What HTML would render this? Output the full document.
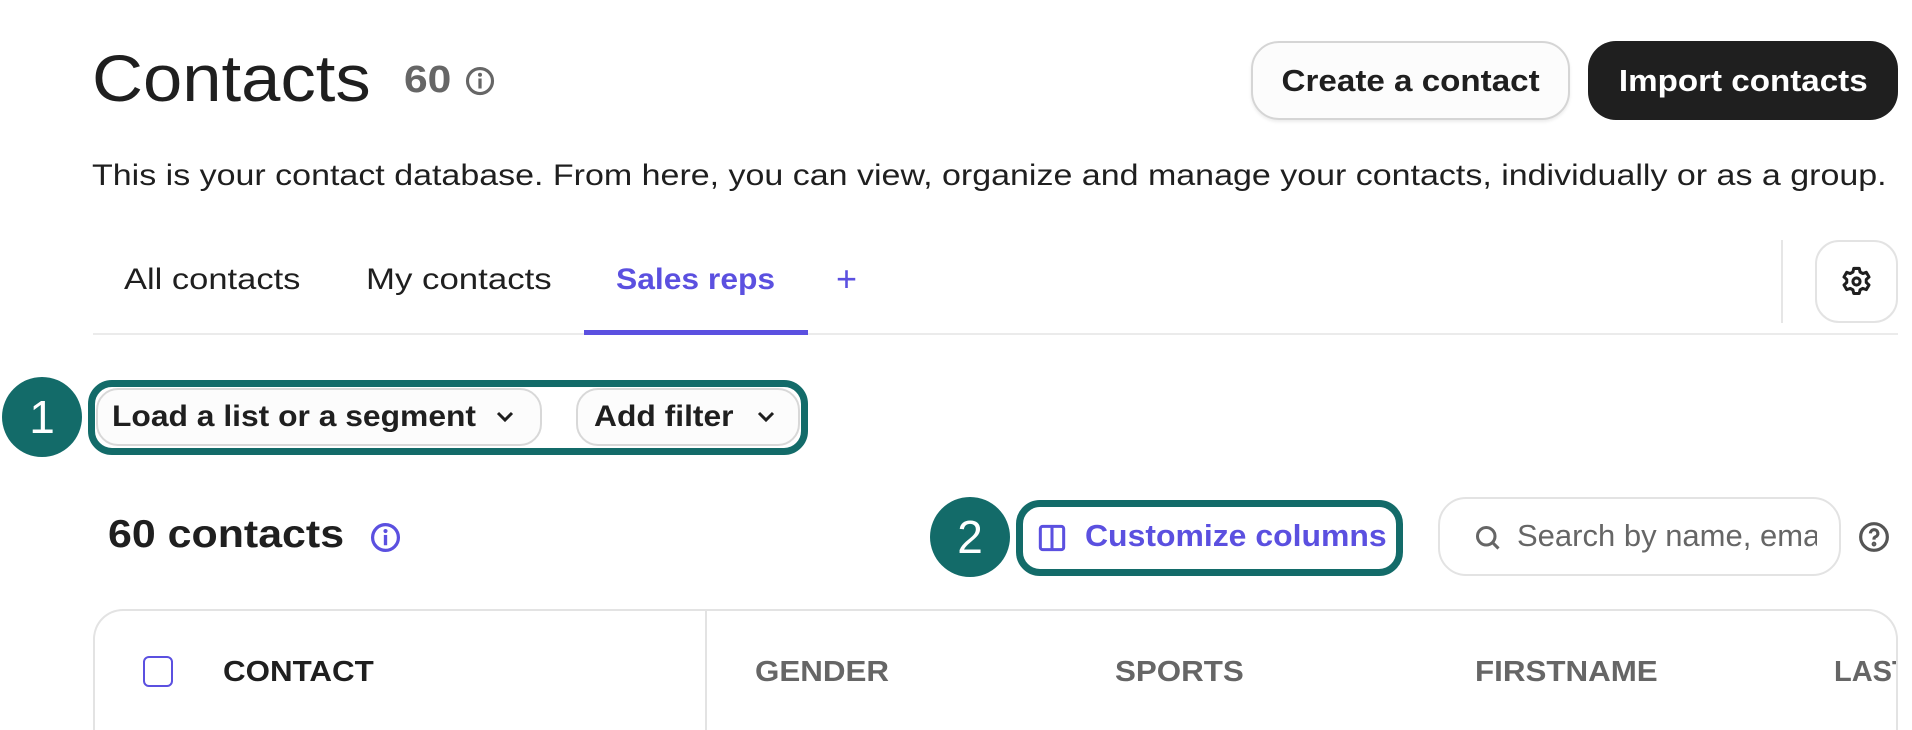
<!DOCTYPE html>
<html style="width:1912px;height:730px;overflow:hidden"><head><meta charset="utf-8"><style>
*{box-sizing:border-box;margin:0;padding:0}
body{width:1912px;height:730px;overflow:hidden;background:#fff;font-family:"Liberation Sans",sans-serif;color:#1f1f1f;position:relative}
.a{position:absolute;white-space:nowrap;transform-origin:left center}
.btn{position:absolute;border-radius:28px;display:flex;align-items:center;justify-content:center;font-weight:bold;font-size:31px;white-space:nowrap}
.btn span{display:inline-block}
.circ{position:absolute;width:80px;height:80px;border-radius:50%;background:#136b69;color:#fff;font-size:46px;display:flex;align-items:center;justify-content:center}
.th{position:absolute;top:656px;font-size:29px;font-weight:bold;color:#666;transform:scaleX(1.08);transform-origin:left center;white-space:nowrap}
</style></head><body>
<div class="a" style="left:92px;top:40px;font-size:66px;color:#1f1f1f;transform:scaleX(1.07)">Contacts</div>
<div class="a" style="left:404px;top:59px;font-size:38px;font-weight:bold;color:#666;transform:scaleX(1.12)">60</div>
<svg class="a" style="left:465px;top:66px" width="30" height="30" viewBox="0 0 24 24"><circle cx="12" cy="12" r="10" fill="none" stroke="#666" stroke-width="2.5"/><rect x="10.7" y="10" width="2.6" height="8" fill="#666"/><circle cx="12" cy="7" r="1.6" fill="#666"/></svg>
<div class="btn" style="left:1251px;top:41px;width:319px;height:79px;border:2px solid #d5d5d5;background:#fcfcfc;box-shadow:0 2px 3px rgba(0,0,0,.08)"><span style="transform:scaleX(1.07)">Create a contact</span></div>
<div class="btn" style="left:1588px;top:41px;width:310px;height:79px;background:#1f1f1f;color:#fff"><span style="transform:scaleX(1.07)">Import contacts</span></div>
<div class="a" style="left:92px;top:159px;font-size:29.3px;color:#1f1f1f;transform:scaleX(1.16)">This is your contact database. From here, you can view, organize and manage your contacts, individually or as a group.</div>
<div class="a" style="left:124px;top:263px;font-size:30px;transform:scaleX(1.15)">All contacts</div>
<div class="a" style="left:366px;top:263px;font-size:30px;transform:scaleX(1.16)">My contacts</div>
<div class="a" style="left:616px;top:263px;font-size:30px;font-weight:bold;color:#5b50e0;transform:scaleX(1.06)">Sales reps</div>
<div class="a" style="left:836px;top:258px;font-size:36px;color:#5b50e0">+</div>
<div class="a" style="left:93px;top:333px;width:1805px;height:2px;background:#ebebeb"></div>
<div class="a" style="left:584px;top:330px;width:224px;height:5px;background:#5b50e0"></div>
<div class="a" style="left:1781px;top:240px;width:2px;height:83px;background:#e6e6e6"></div>
<div class="a" style="left:1815px;top:240px;width:83px;height:83px;border:2px solid #e3e3e3;border-radius:24px"></div>
<svg class="a" style="left:1840px;top:265px" width="33" height="33" viewBox="0 0 24 24" fill="none" stroke="#1f1f1f" stroke-width="2.2" stroke-linejoin="round"><path d="M10 2.5h4l.6 2.6 2 1.1 2.5-.9 2 3.4-2 1.8v2.2l2 1.8-2 3.4-2.5-.9-2 1.1-.6 2.6h-4l-.6-2.6-2-1.1-2.5.9-2-3.4 2-1.8v-2.2l-2-1.8 2-3.4 2.5.9 2-1.1z"/><circle cx="12" cy="12" r="2.6"/></svg>
<div class="circ" style="left:2px;top:377px">1</div>
<div class="a" style="left:88px;top:380px;width:720px;height:75px;border:7px solid #136b69;border-radius:24px"></div>
<div class="btn" style="left:96px;top:388px;width:446px;height:58px;border:2px solid #d8d8d8;background:#fcfcfc;border-radius:22px;justify-content:flex-start;padding-left:14px;font-size:30px"><span style="transform:scaleX(1.06);transform-origin:left center">Load a list or a segment</span><svg style="margin-left:40px" width="20" height="14" viewBox="0 0 20 14"><path d="M3 3l7 7 7-7" fill="none" stroke="#1f1f1f" stroke-width="3"/></svg></div>
<div class="btn" style="left:576px;top:388px;width:224px;height:58px;border:2px solid #d8d8d8;background:#fcfcfc;border-radius:22px;justify-content:flex-start;padding-left:16px;font-size:30px"><span style="transform:scaleX(1.06);transform-origin:left center">Add filter</span><svg style="margin-left:30px" width="20" height="14" viewBox="0 0 20 14"><path d="M3 3l7 7 7-7" fill="none" stroke="#1f1f1f" stroke-width="3"/></svg></div>
<div class="a" style="left:108px;top:513px;font-size:39px;font-weight:bold;transform:scaleX(1.1)">60 contacts</div>
<svg class="a" style="left:370px;top:522px" width="31" height="31" viewBox="0 0 24 24"><circle cx="12" cy="12" r="10" fill="none" stroke="#5b50e0" stroke-width="2.5"/><rect x="10.7" y="10" width="2.6" height="8" fill="#5b50e0"/><circle cx="12" cy="7" r="1.6" fill="#5b50e0"/></svg>
<div class="circ" style="left:930px;top:497px">2</div>
<div class="a" style="left:1016px;top:500px;width:387px;height:76px;border:7px solid #136b69;border-radius:24px"></div>
<svg class="a" style="left:1038px;top:524px" width="28" height="28" viewBox="0 0 24 24" fill="none" stroke="#5b50e0" stroke-width="2.6"><rect x="2" y="2" width="20" height="20" rx="2"/><path d="M12 2v20"/></svg>
<div class="a" style="left:1085px;top:518px;font-size:31px;font-weight:bold;color:#5b50e0;transform:scaleX(1.03)">Customize columns</div>
<div class="a" style="left:1438px;top:497px;width:403px;height:79px;border:2px solid #e3e3e3;border-radius:28px"></div>
<svg class="a" style="left:1474px;top:524px" width="28" height="28" viewBox="0 0 24 24" fill="none" stroke="#666" stroke-width="2.6"><circle cx="10.5" cy="10.5" r="7.5"/><path d="M16 16l5 5"/></svg>
<div class="a" style="left:1517px;top:518px;width:300px;overflow:hidden;font-size:31px;color:#666">Search by name, email</div>
<svg class="a" style="left:1858px;top:521px" width="32" height="32" viewBox="0 0 24 24" fill="none" stroke="#555" stroke-width="2.4"><circle cx="12" cy="12" r="10"/><path d="M9.3 9.3a2.8 2.8 0 1 1 3.6 2.7c-.6.3-.9.8-.9 1.5v.5"/><circle cx="12" cy="17.3" r=".6" fill="#555"/></svg>
<div class="a" style="left:93px;top:609px;width:1805px;height:121px;border:2px solid #e3e3e3;border-bottom:none;border-radius:30px 30px 0 0"></div>
<div class="a" style="left:705px;top:610px;width:2px;height:120px;background:#e3e3e3"></div>
<div class="a" style="left:143px;top:656px;width:30px;height:31px;border:2px solid #5b50e0;border-radius:6px"></div>
<div class="th" style="left:223px;color:#1f1f1f">CONTACT</div>
<div class="th" style="left:755px">GENDER</div>
<div class="th" style="left:1115px">SPORTS</div>
<div class="th" style="left:1475px">FIRSTNAME</div>
<div class="a" style="left:1834px;top:656px;width:62px;overflow:hidden;font-size:29px;font-weight:bold;color:#666">LASTNAME</div>
</body></html>
